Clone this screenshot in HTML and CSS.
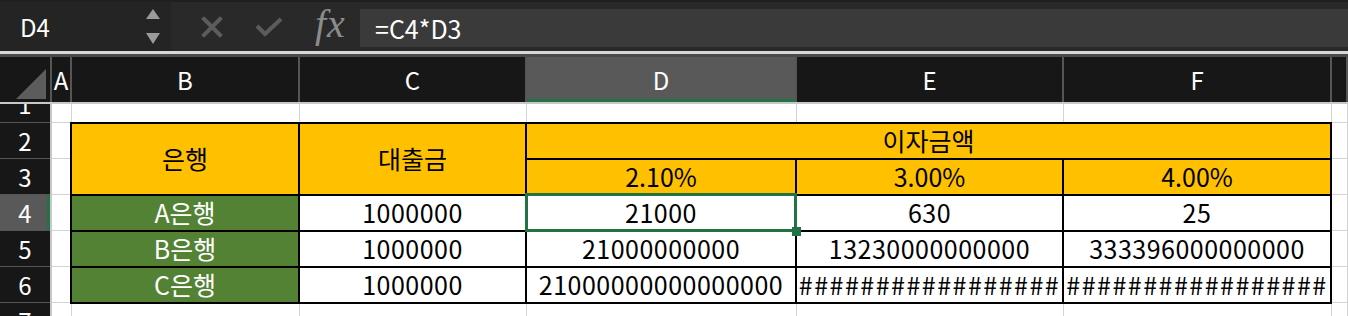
FILE: index.html
```html
<!DOCTYPE html>
<html lang="ko">
<head>
  <meta charset="UTF-8" />
  <meta name="viewport" content="width=device-width, initial-scale=1.0"/>
  <title>이자금액</title>
  <link rel="stylesheet" href="styles.css">
</head>
<body>

  <div class="formula-bar">
    <div class="name-box">
      <span class="cell-ref">D4</span>
      <span class="spin">
        <svg width="14" height="36" viewBox="0 0 14 36">
          <path d="M7 0 L14 10 L0 10 Z" fill="#9a9a9a"/>
          <path d="M0 24 L14 24 L7 35 Z" fill="#9a9a9a"/>
        </svg>
      </span>
    </div>
    <div class="bar-icons">
      <svg class="icon" width="22" height="22" viewBox="0 0 22 22">
        <path d="M3 3 L19 19 M19 3 L3 19" stroke="#5c5c5c" stroke-width="4" stroke-linecap="square"/>
      </svg>
      <svg class="icon" width="28" height="22" viewBox="0 0 28 22">
        <path d="M2 10 L10 18 L26 3" stroke="#5c5c5c" stroke-width="4" fill="none"/>
      </svg>
      <span class="fx">fx</span>
    </div>
    <div class="formula-input">=C4*D3</div>
  </div>

  <div class="divider"></div>

  <table class="sheet">
    <colgroup>
      <col class="w-hdr"><col class="w-a"><col class="w-b"><col class="w-c">
      <col class="w-d"><col class="w-e"><col class="w-f"><col>
    </colgroup>
    <tr class="col-hdr">
      <th class="corner">
        <svg width="30" height="30" viewBox="0 0 30 30"><path d="M30 0 L30 30 L0 30 Z" fill="#5c5c5c"/></svg>
      </th>
      <th>A</th><th>B</th><th>C</th><th class="sel-col">D</th><th>E</th><th>F</th><th></th>
    </tr>
    <tr class="r1">
      <th class="row-hdr"><div class="cut"><span>1</span></div></th>
      <td></td><td></td><td></td><td></td><td></td><td></td><td></td>
    </tr>
    <tr>
      <th class="row-hdr">2</th>
      <td></td>
      <td class="t head" rowspan="2">은행</td>
      <td class="t head" rowspan="2">대출금</td>
      <td class="t head" colspan="3">이자금액</td>
      <td></td>
    </tr>
    <tr>
      <th class="row-hdr">3</th>
      <td></td>
      <td class="t head">2.10%</td>
      <td class="t head">3.00%</td>
      <td class="t head">4.00%</td>
      <td></td>
    </tr>
    <tr>
      <th class="row-hdr sel-row">4</th>
      <td></td>
      <td class="t bank">A은행</td>
      <td class="t">1000000</td>
      <td class="t active">21000</td>
      <td class="t">630</td>
      <td class="t">25</td>
      <td></td>
    </tr>
    <tr>
      <th class="row-hdr">5</th>
      <td></td>
      <td class="t bank">B은행</td>
      <td class="t">1000000</td>
      <td class="t">21000000000</td>
      <td class="t">13230000000000</td>
      <td class="t">333396000000000</td>
      <td></td>
    </tr>
    <tr>
      <th class="row-hdr">6</th>
      <td></td>
      <td class="t bank">C은행</td>
      <td class="t">1000000</td>
      <td class="t">21000000000000000</td>
      <td class="t hash">#################</td>
      <td class="t hash">#################</td>
      <td></td>
    </tr>
    <tr>
      <th class="row-hdr">7</th>
      <td></td><td></td><td></td><td></td><td></td><td></td><td></td>
    </tr>
  </table>

</body>
</html>
```

FILE: styles.css
```css
body {
  margin: 0;
  font-family: "Noto Sans CJK KR", "Noto Sans", sans-serif;
  background-color: #ffffff;
  overflow: hidden;
  height: 316px;
}

.formula-bar {
  display: flex;
  align-items: stretch;
  height: 49px;
  background-color: #292929;
  border-top: 2px solid #1f1f1f;
}

.name-box {
  width: 171px;
  display: flex;
  align-items: center;
  justify-content: space-between;
  padding: 0 11px 0 20px;
  box-sizing: border-box;
  background-color: #242424;
}

.cell-ref {
  color: #fff;
  font-size: 24px;
}

.spin svg {
  display: block;
}

.bar-icons {
  width: 189px;
  display: flex;
  align-items: center;
  padding-left: 30px;
  box-sizing: border-box;
}

.bar-icons .icon {
  margin-right: 32px;
}

.fx {
  font-family: "Liberation Serif", serif;
  font-style: italic;
  font-size: 40px;
  line-height: 1;
  color: #8c8c8c;
  margin-left: 0;
  margin-top: -6px;
  letter-spacing: 1px;
}

.formula-input {
  flex: 1;
  margin: 7px 0 4px;
  background-color: #3a3a3a;
  color: #fff;
  font-size: 25px;
  display: flex;
  align-items: center;
  padding-left: 15px;
}

.divider {
  height: 3px;
  background-color: #d8d8d8;
  border-bottom: 3px solid #4a4a4a;
}

.sheet {
  width: 1348px;
  table-layout: fixed;
  border-collapse: collapse;
}

.w-hdr { width: 51px; }
.w-a { width: 20px; }
.w-b { width: 228px; }
.w-c { width: 227px; }
.w-d { width: 270px; }
.w-e { width: 267px; }
.w-f { width: 268px; }

.sheet th {
  background-color: #171717;
  color: #fff;
  font-weight: normal;
  font-size: 24px;
  padding: 0;
  text-align: center;
  overflow: hidden;
}

.col-hdr th {
  height: 42px;
  border-left: 2px solid #555;
  border-right: 2px solid #555;
  border-bottom: 2px solid #c8c8c8;
}

.col-hdr th.corner {
  border-left: none;
  text-align: right;
  vertical-align: bottom;
  padding: 0 4px 3px 0;
}

.corner svg {
  display: block;
  margin-left: auto;
}

.col-hdr th.sel-col {
  background-color: #595959;
  box-shadow: inset 0 -3px #217346;
}

.row-hdr {
  border-right: 2px solid #c8c8c8;
  border-bottom: 1px solid #555;
}

.sheet th.sel-row {
  background-color: #595959;
  box-shadow: inset -3px 0 #217346;
}

.sheet td {
  height: 34px;
  padding: 0;
  border: 1px solid #d4d4d4;
  font-size: 25px;
  line-height: 1;
  text-align: center;
  white-space: nowrap;
  overflow: hidden;
  color: #000;
}

.sheet tr.r1 td,
.sheet tr.r1 th {
  height: 17px;
}

.cut {
  height: 18px;
  overflow: hidden;
}

.cut span {
  display: block;
  line-height: 36px;
  margin-top: -18px;
}

.sheet td.t {
  border: 2px solid #000;
  letter-spacing: 0.5px;
}

.sheet td.head {
  background-color: #ffc000;
  letter-spacing: 0;
}

.sheet td.bank {
  background-color: #548235;
  color: #fff;
  letter-spacing: 0;
}

.sheet td.hash {
  letter-spacing: 1.5px;
  text-overflow: clip;
}

.sheet td.active {
  position: relative;
  overflow: visible;
}

.sheet td.active::after {
  content: "";
  position: absolute;
  top: -3px;
  left: -2px;
  right: -2px;
  bottom: -2px;
  border: 3px solid #217346;
  pointer-events: none;
}

.sheet td.active::before {
  content: "";
  position: absolute;
  right: -6px;
  bottom: -6px;
  width: 9px;
  height: 9px;
  background-color: #217346;
  z-index: 1;
}
```
